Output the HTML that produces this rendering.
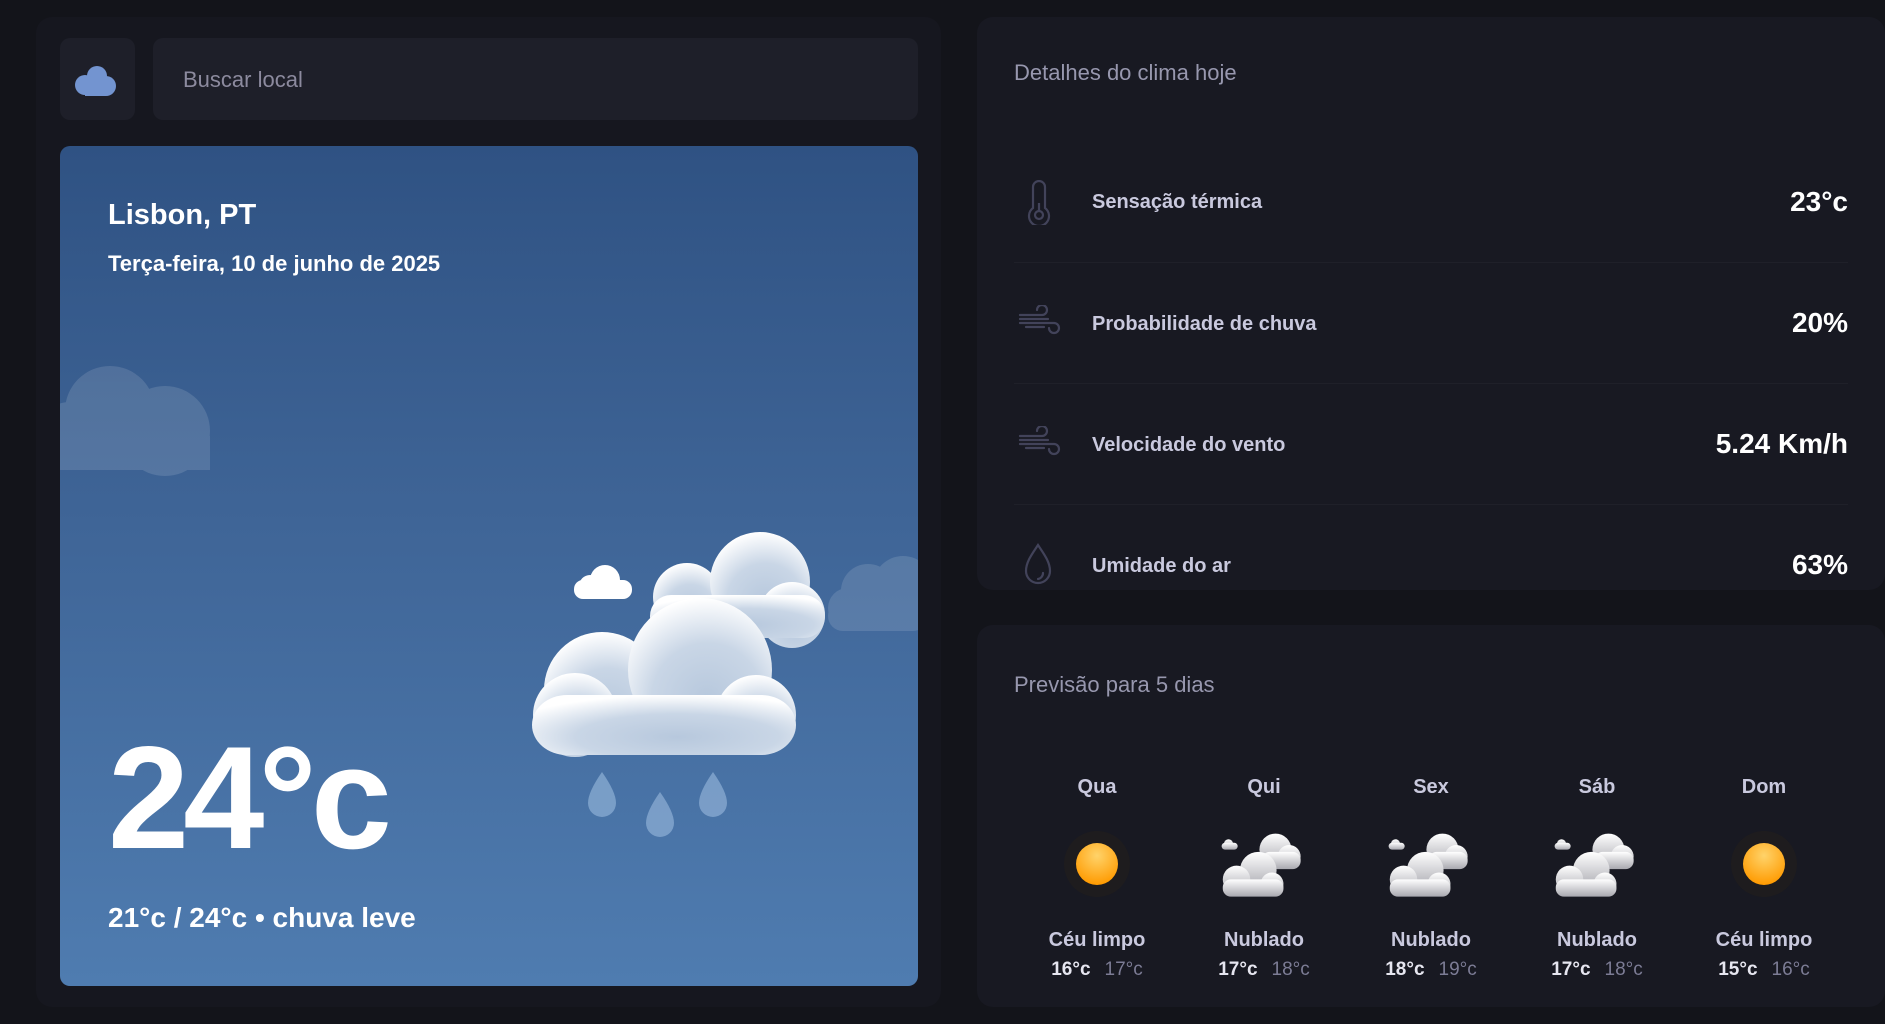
<!DOCTYPE html>
<html><head><meta charset="utf-8">
<style>
*{margin:0;padding:0;box-sizing:border-box}
body{width:1885px;height:1024px;background:#13141a;font-family:"Liberation Sans",sans-serif;position:relative;overflow:hidden}
.abs{position:absolute}
.panel{background:#16171f;border-radius:16px}
.lbl{position:absolute;left:1092px;font-size:20px;font-weight:bold;color:#c9c9de}
.val{position:absolute;right:37px;font-size:28px;font-weight:bold;color:#fff;text-align:right}
.div{position:absolute;left:1014px;width:834px;height:1px;background:#1f2029}
.col{position:absolute;width:170px;text-align:center;top:776px}
.col .d{font-size:20px;font-weight:bold;color:#c9c9de;height:26px}
.col .ic{height:124px;display:flex;align-items:center;justify-content:center}
.col .t{font-size:20px;font-weight:bold;color:#c9c9de;margin-top:3px}
.col .r{font-size:19px;font-weight:bold;color:#e6e6f0;margin-top:7px}
.col .r span{color:#7c7c95;font-weight:normal;margin-left:14px}
</style></head><body>
<div class="abs panel" style="left:36px;top:17px;width:905px;height:990px"></div>
<div class="abs" style="left:60px;top:38px;width:75px;height:82px;background:#1e1f29;border-radius:10px"></div>
<svg class="abs" style="left:72px;top:64px" width="50" height="34" viewBox="0 0 50 34">
<circle cx="25" cy="12" r="10" fill="#7394d0"/><circle cx="13" cy="21" r="10" fill="#7394d0"/><circle cx="34" cy="22" r="10" fill="#7394d0"/><rect x="13" y="18" width="21" height="14" fill="#7394d0"/></svg>
<div class="abs" style="left:153px;top:38px;width:765px;height:82px;background:#1e1f29;border-radius:10px"></div>
<div class="abs" style="left:183px;top:67px;font-size:22px;color:#8c8a9e">Buscar local</div>

<div class="abs" style="left:60px;top:146px;width:858px;height:840px;border-radius:10px;background:linear-gradient(180deg,#2f5283 0%,#3f6597 45%,#4f7cb0 100%);overflow:hidden">
<svg class="abs" style="left:-20px;top:200px" width="200" height="130"><g fill="#ffffff" opacity="0.12"><circle cx="70" cy="65" r="45"/><circle cx="125" cy="85" r="45"/><circle cx="30" cy="90" r="34"/><rect x="0" y="90" width="170" height="34"/></g></svg>
<svg class="abs" style="left:768px;top:410px" width="100" height="80"><g fill="#ffffff" opacity="0.12"><circle cx="40" cy="35" r="27"/><circle cx="75" cy="30" r="30"/><circle cx="20" cy="52" r="20"/><rect x="0" y="45" width="100" height="30" rx="15"/></g></svg>
</div>
<div class="abs" style="left:108px;top:199px;font-size:29px;font-weight:bold;color:#fff">Lisbon, PT</div>
<div class="abs" style="left:108px;top:251px;font-size:22px;font-weight:bold;color:#fff">Terça-feira, 10 de junho de 2025</div>
<div class="abs" style="left:108px;top:725px;font-size:146px;font-weight:bold;color:#fff;line-height:1;letter-spacing:-6px">24°c</div>
<div class="abs" style="left:108px;top:902px;font-size:28px;font-weight:bold;color:#fff">21°c / 24°c • chuva leve</div>

<svg class="abs" style="left:520px;top:520px" width="400" height="320" viewBox="0 0 400 320">
<defs><radialGradient id="cg" cx="0.55" cy="0.7" r="0.7"><stop offset="0" stop-color="#b7c8dd"/><stop offset="0.55" stop-color="#c9d6e6"/><stop offset="1" stop-color="#ffffff"/></radialGradient></defs>
<g fill="url(#cg)">
<circle cx="167" cy="77" r="34"/><circle cx="240" cy="62" r="50"/><circle cx="272" cy="95" r="33"/><rect x="130" y="75" width="175" height="43" rx="21"/>
</g>
<g fill="#fff"><circle cx="85" cy="60" r="15"/><circle cx="70" cy="66" r="11"/><rect x="54" y="60" width="58" height="19" rx="9"/></g>
<g fill="url(#cg)">
<circle cx="82" cy="170" r="58"/><circle cx="180" cy="150" r="72"/><circle cx="236" cy="195" r="40"/><circle cx="55" cy="195" r="42"/><rect x="12" y="175" width="264" height="60" rx="35"/>
</g>
<g fill="#8fb0d6" opacity="0.7">
<path d="M82 252 Q96 272 96 283 A14 14 0 0 1 68 283 Q68 272 82 252Z"/>
<path d="M140 272 Q154 292 154 303 A14 14 0 0 1 126 303 Q126 292 140 272Z"/>
<path d="M193 252 Q207 272 207 283 A14 14 0 0 1 179 283 Q179 272 193 252Z"/>
</g></svg>

<div class="abs panel" style="left:977px;top:17px;width:908px;height:573px;background:#181922"></div>
<div class="abs" style="left:1014px;top:60px;font-size:22px;color:#9797ae">Detalhes do clima hoje</div>
<svg class="abs" style="left:1024px;top:180px" width="30" height="45" viewBox="0 0 30 45" fill="none" stroke="#42435a" stroke-width="2.2"><path d="M9 28V7a6 6 0 0 1 12 0v21a10 10 0 1 1-12 0z"/><circle cx="15" cy="35" r="4"/><path d="M15 31v-8"/></svg>
<div class="lbl" style="top:191px">Sensação térmica</div><div class="val" style="top:186px">23°c</div>
<div class="div" style="top:262px"></div>
<svg class="abs" style="left:1018px;top:305px" width="44" height="36" viewBox="0 0 44 36" fill="none" stroke="#42435a" stroke-width="2.2" stroke-linecap="round"><path d="M2 10h22a5 5 0 1 0-5-5"/><path d="M2 18h34a5 5 0 1 1-5 5"/><path d="M2 14h28M8 22h18"/></svg>
<div class="lbl" style="top:313px">Probabilidade de chuva</div><div class="val" style="top:307px">20%</div>
<div class="div" style="top:383px"></div>
<svg class="abs" style="left:1018px;top:426px" width="44" height="36" viewBox="0 0 44 36" fill="none" stroke="#42435a" stroke-width="2.2" stroke-linecap="round"><path d="M2 10h22a5 5 0 1 0-5-5"/><path d="M2 18h34a5 5 0 1 1-5 5"/><path d="M2 14h28M8 22h18"/></svg>
<div class="lbl" style="top:434px">Velocidade do vento</div><div class="val" style="top:428px">5.24 Km/h</div>
<div class="div" style="top:504px"></div>
<svg class="abs" style="left:1020px;top:542px" width="36" height="46" viewBox="0 0 36 46" fill="none" stroke="#42435a" stroke-width="2.2"><path d="M18 3C12 12 6 20 6 29a12 12 0 0 0 24 0C30 20 24 12 18 3z"/><path d="M23 31a6 6 0 0 1-5 6" stroke-linecap="round"/></svg>
<div class="lbl" style="top:555px">Umidade do ar</div><div class="val" style="top:549px">63%</div>

<div class="abs panel" style="left:977px;top:625px;width:908px;height:382px;background:#181922"></div>
<div class="abs" style="left:1014px;top:672px;font-size:22px;color:#9797ae">Previsão para 5 dias</div>

<svg width="0" height="0" style="position:absolute"><defs>
<radialGradient id="sun" cx="0.5" cy="0.3" r="0.7"><stop offset="0" stop-color="#ffd36a"/><stop offset="1" stop-color="#ff9a00"/></radialGradient>
<linearGradient id="cl" x1="0" y1="0" x2="0" y2="1"><stop offset="0" stop-color="#ffffff"/><stop offset="1" stop-color="#a9a9b0"/></linearGradient>
</defs></svg>

<div class="col" style="left:1012px"><div class="d">Qua</div><div class="ic"><svg width="70" height="70"><circle cx="35" cy="35" r="33" fill="#1e1c1e"/><circle cx="35" cy="35" r="21" fill="url(#sun)"/></svg></div><div class="t">Céu limpo</div><div class="r">16°c<span>17°c</span></div></div>
<div class="col" style="left:1179px"><div class="d">Qui</div><div class="ic"><svg width="92" height="71" viewBox="0 0 80 62"><g fill="url(#cl)"><circle cx="50" cy="18" r="14"/><circle cx="62" cy="24" r="10"/><rect x="38" y="20" width="34" height="15" rx="7"/><circle cx="9" cy="13" r="4"/><rect x="3" y="12" width="14" height="6" rx="3"/><circle cx="35" cy="36" r="16"/><circle cx="16" cy="44" r="12"/><circle cx="47" cy="48" r="10"/><rect x="4" y="44" width="53" height="15" rx="7"/></g></svg></div><div class="t">Nublado</div><div class="r">17°c<span>18°c</span></div></div>
<div class="col" style="left:1346px"><div class="d">Sex</div><div class="ic"><svg width="92" height="71" viewBox="0 0 80 62"><g fill="url(#cl)"><circle cx="50" cy="18" r="14"/><circle cx="62" cy="24" r="10"/><rect x="38" y="20" width="34" height="15" rx="7"/><circle cx="9" cy="13" r="4"/><rect x="3" y="12" width="14" height="6" rx="3"/><circle cx="35" cy="36" r="16"/><circle cx="16" cy="44" r="12"/><circle cx="47" cy="48" r="10"/><rect x="4" y="44" width="53" height="15" rx="7"/></g></svg></div><div class="t">Nublado</div><div class="r">18°c<span>19°c</span></div></div>
<div class="col" style="left:1512px"><div class="d">Sáb</div><div class="ic"><svg width="92" height="71" viewBox="0 0 80 62"><g fill="url(#cl)"><circle cx="50" cy="18" r="14"/><circle cx="62" cy="24" r="10"/><rect x="38" y="20" width="34" height="15" rx="7"/><circle cx="9" cy="13" r="4"/><rect x="3" y="12" width="14" height="6" rx="3"/><circle cx="35" cy="36" r="16"/><circle cx="16" cy="44" r="12"/><circle cx="47" cy="48" r="10"/><rect x="4" y="44" width="53" height="15" rx="7"/></g></svg></div><div class="t">Nublado</div><div class="r">17°c<span>18°c</span></div></div>
<div class="col" style="left:1679px"><div class="d">Dom</div><div class="ic"><svg width="70" height="70"><circle cx="35" cy="35" r="33" fill="#1e1c1e"/><circle cx="35" cy="35" r="21" fill="url(#sun)"/></svg></div><div class="t">Céu limpo</div><div class="r">15°c<span>16°c</span></div></div>
</body></html>
